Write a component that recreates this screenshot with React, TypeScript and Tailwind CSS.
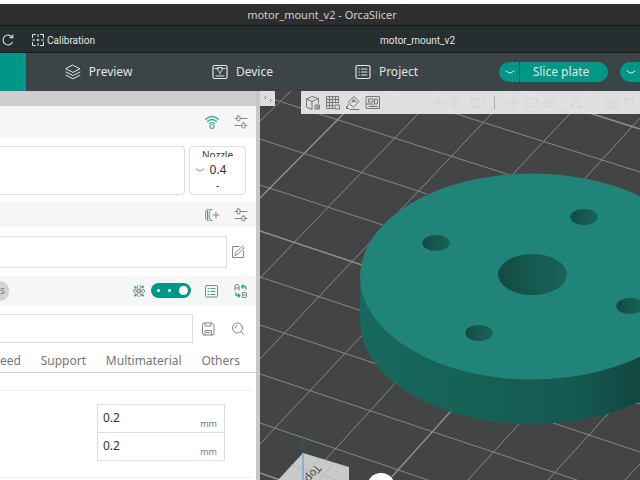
import type { ReactNode } from 'react';

interface IconProps {
  className?: string;
  viewBox?: string;
  children: ReactNode;
}

const Icon = ({ className = '', viewBox = '0 0 16 16', children }: IconProps) => (
  <svg
    className={className}
    viewBox={viewBox}
    fill="none"
    stroke="currentColor"
    strokeLinecap="round"
    strokeLinejoin="round"
    aria-hidden="true"
  >
    {children}
  </svg>
);

const RedoIcon = () => (
  <Icon className="h-3.5 w-3.5">
    <path d="M12.600 4.800A5.600 5.600 0 1 0 13 10.500M13.500 2v3.500H10" strokeWidth="1.200" />
  </Icon>
);

const CalibrationIcon = () => (
  <Icon className="h-3 w-3" viewBox="0 0 12 12">
    <path d="M.5 3.500v-3h3M8.500.5h3v3M11.500 8.500v3h-3M3.500 11.500h-3v-3" />
    <path d="M6 .5v2M6 9.500v2M.5 6h2M9.500 6h2M5 6h2M6 5v2" />
  </Icon>
);

const LayersIcon = () => (
  <Icon className="h-4 w-4">
    <path d="M8 1.200 15 4.800 8 8.400 1 4.800zM1 8l7 3.600L15 8M1 11.200l7 3.600 7-3.600" />
  </Icon>
);

const DeviceIcon = () => (
  <Icon className="h-4 w-4">
    <rect x="1" y="1.500" width="14" height="13" rx="1.500" strokeWidth="1.200" />
    <path d="M3 4.500h3M10 4.500h3M6 3.500h4v3L8 8.500 6 6.500zM8 8.500V10M4 12h8" />
  </Icon>
);

const ProjectIcon = () => (
  <Icon className="h-4 w-4">
    <rect x="1" y="1.500" width="14" height="13" rx="1.500" strokeWidth="1.200" />
    <path d="M4 5h.5M6.500 5H12M4 8h.5M6.500 8H12M4 11h.5M6.500 11H12" strokeWidth="1.200" />
  </Icon>
);

const ChevronIcon = () => (
  <Icon className="h-2 w-2.5" viewBox="0 0 10 8">
    <path d="m1 3 3 1.800q1 .5 2 0L9 3" />
  </Icon>
);

const WifiIcon = () => (
  <Icon className="h-4 w-4 text-[#3fae9f]">
    <path d="M1.500 5.500Q8-.5 14.500 5.500M3.500 7.500q4.500-4 9 0M5.500 9.500q2.500-2 5 0" strokeWidth="1.200" />
    <circle cx="8" cy="12.500" r="2" strokeWidth="1.200" />
  </Icon>
);

const SlidersIcon = () => (
  <Icon className="h-4 w-4">
    <path d="M2 4.500h2M7.500 4.500H14M2 11.500h6.500M12 11.500h2" />
    <rect x="4" y="2" width="3" height="5" rx="1" />
    <rect x="9" y="9" width="3" height="5" rx="1" />
  </Icon>
);

const FilamentIcon = () => (
  <Icon className="h-4 w-4">
    <path d="M4.500 2.500H3q-1.500 0-1.500 5.500T3 13.500h1.500M6.500 13.500H8M6.500 2.500H8M9 8h6M12 5v6" />
    <path d="M6.500 2.500Q5 3 5 8t1.500 5.500" stroke="#2fa596" />
    <path d="M3.500 4v8" stroke="#2fa596" />
  </Icon>
);

const EditIcon = () => (
  <Icon className="h-4 w-4">
    <path d="M9 2.500H2.500v11h11V7" />
    <path d="m5 11 .8-2.800L12.500 2l1.800 1.600-6.700 6.600z" />
  </Icon>
);

const AtomIcon = () => (
  <Icon className="h-4 w-4">
    <circle cx="8" cy="8" r="1.500" />
    <path d="M6.500 7.500 3 6.500 2 8l1.500 1.500 3-1M9.500 7.500l3.500-1L14 8l-1.500 1.500-3-1M7.200 6.500 6 4l1-1.500M8.800 6.500 10 4 9 2.500M7.200 9.500 6 12l1 1.500M8.800 9.500 10 12l-1 1.500" />
    <path d="m4 4 .8.8M12 3.500l-.8.8M4 12.500l.8-.8M12 12.500l-.8-.8" stroke="#2fa596" strokeWidth="1.800" />
  </Icon>
);

const ListIcon = () => (
  <Icon className="h-4 w-4">
    <rect x="2.500" y="2.500" width="12" height="11.500" rx="1" />
    <path d="M5 5.500h1M8 5.500h4M5 8.500h1M8 8.500h4M5 11.500h1M8 11.500h4" stroke="#2fa596" />
  </Icon>
);

const CompareIcon = () => (
  <Icon className="h-4 w-4">
    <path d="M2 7V3l1-1.500h2L6 3v4M2 5h4M10 9.500h3q1.500 1.500 0 2.500 1.500 1 0 2.500h-3zM10 12h3" />
    <path d="M10 2 8.500 3.500 10 5M8.500 3.500H12q1 0 1 2.500M3 10v2q0 .5.5.5h3M5.500 11 7 12.500 5.500 14" stroke="#2fa596" strokeWidth="1.300" />
  </Icon>
);

const SaveIcon = () => (
  <Icon className="h-4 w-4">
    <path d="M2.500 3q0-1 1-1h8.500l2 2v9q0 1-1 1H3.500q-1 0-1-1zM5 2v3h6V2M5 14V9.500h6.500V14M6.500 11.500h3" />
  </Icon>
);

const SearchIcon = () => (
  <Icon className="h-4 w-4">
    <circle cx="7.500" cy="7" r="5" />
    <path d="m11 10.500 2.500 3M5 7Q5 5 7 4.500" />
  </Icon>
);

const toolbarIcons = [
  {
    label: 'Add object',
    art: <path d="M1.500 4 7 1.500 13.500 3.500V8M1.500 4v8L7 14.500V6.500M1.500 4 7 6.500l6.500-3M10.500 10h4v4h-4zM12.500 11v2M11.500 12h2" />,
  },
  {
    label: 'Add plate',
    art: <path d="M9 13.500H1.500v-12h12V8M4.500 1.500v12M7.500 1.500v12M10.500 1.500V8M1.500 4.500h12M1.500 7.500h12M1.500 10.500H9M10.500 10h4v4h-4z" />,
  },
  {
    label: 'Auto orient',
    art: <path d="m3.500 7 5.500-5.500L14 6.500 8.500 12zM7 7.500l1.500-3.500 2.500 3M7.500 6.500h2.500M3.500 9.500l-2 4h2M1.500 13.500v-2M5 14.500h9" />,
  },
  {
    label: 'Arrange',
    art: <path d="M1.500 1.500h13v12h-13zM4 4h4v3H4zM10 4h2.500v5H10zM4 9h3M4 11.500h8.500M8 9v2M1.500 9H4" />,
  },
];

// Grid lines of the build plate: x1, y1, x2, y2
const gridLines = [
  [384, 91, 640, 172],
  [260, 95, 510, 175],
  [260, 139, 427, 194],
  [260, 185, 383, 225],
  [260, 277, 362, 311],
  [260, 325, 640, 452],
  [260, 374, 577, 480],
  [260, 423, 428, 480],
  [500, 358, 640, 404],
  [260, 121, 291, 91],
  [260, 278, 440, 91],
  [260, 359, 513, 91],
  [260, 444, 591, 91],
  [307, 480, 400, 378],
  [580, 184, 640, 118],
  [468, 480, 530, 412],
  [548, 480, 617, 404],
  [625, 480, 640, 464],
];

const majorLines = [
  [520, 91, 640, 129],
  [260, 231, 362, 265],
  [260, 473, 280, 480],
  [260, 198, 366, 91],
  [389, 480, 460, 401],
];

const screwHoles = [
  [436, 243],
  [584, 217],
  [479, 333],
  [630, 306],
];

const BuildPlate = () => (
  <svg
    className="absolute inset-0 h-full w-full"
    viewBox="260 91 380 389"
    preserveAspectRatio="xMinYMin slice"
    role="img"
    aria-label="Build plate with motor mount"
  >
    <defs>
      <linearGradient id="side" x1="0" x2="1">
        <stop offset="0" stopColor="#17695e" />
        <stop offset="0.3" stopColor="#166156" />
        <stop offset="0.62" stopColor="#155a52" />
        <stop offset="0.82" stopColor="#114640" />
        <stop offset="1" stopColor="#103f39" />
      </linearGradient>
      <linearGradient id="hole" x1="0" x2="1">
        <stop offset="0" stopColor="#114a43" />
        <stop offset="0.5" stopColor="#15594f" />
        <stop offset="1" stopColor="#176358" />
      </linearGradient>
    </defs>
    <rect x="260" y="91" width="380" height="389" fill="#434544" />
    <g stroke="#878988">
      {gridLines.map(([x1, y1, x2, y2]) => (
        <line key={`${x1}-${y1}`} x1={x1} y1={y1} x2={x2} y2={y2} />
      ))}
    </g>
    <g stroke="#8f9190" strokeWidth="1.400">
      {majorLines.map(([x1, y1, x2, y2]) => (
        <line key={`${x1}-${y1}`} x1={x1} y1={y1} x2={x2} y2={y2} />
      ))}
    </g>

    {/* Motor mount */}
    <path d="M360 277v44a172 103 0 0 0 344 0v-44z" fill="url(#side)" />
    <ellipse cx="532" cy="276.500" rx="172" ry="103" fill="#208578" />
    <ellipse cx="532.500" cy="274.500" rx="34.500" ry="20.500" fill="url(#hole)" />
    {screwHoles.map(([cx, cy]) => (
      <ellipse key={cx} cx={cx} cy={cy} rx="13.700" ry="8" fill="url(#hole)" />
    ))}

    {/* View cube */}
    <path d="M303 453 349 467v13h-71z" fill="#c9c9c9" />
    <path d="m291 465 46 15M320 458l-19 22M334 463l-15 17" stroke="#b8b8b8" fill="none" />
    <path d="M303 453v27" stroke="#86b0da" strokeWidth="2" />
    <path d="M300.500 440h4l-4 8h5" stroke="#2c6076" fill="none" />
    <text transform="translate(316 464) rotate(128)" fontSize="11" fill="#4a4a4a">
      Top
    </text>
    <circle cx="381" cy="487" r="14" fill="#fff" />
  </svg>
);

const SectionHeader = ({ className = '', children }: { className?: string; children: ReactNode }) => (
  <div className={`flex items-center justify-end bg-[#f6f6f6] pr-[7px] text-[#858585] ${className}`}>
    {children}
  </div>
);

const IconButton = ({ label, children }: { label: string; children: ReactNode }) => (
  <button aria-label={label} className="flex h-4 w-4 shrink-0 items-center justify-center">
    {children}
  </button>
);

const LayerInput = ({ label, className = '' }: { label: string; className?: string }) => (
  <label className={`flex h-[29px] w-[128px] items-center border border-[#dcdcdc] bg-white pr-[7px] pl-[5px] ${className}`}>
    <input
      aria-label={label}
      defaultValue="0.2"
      className="w-full min-w-0 flex-1 bg-transparent pb-0.5 text-[12px] text-[#333] outline-none"
    />
    <span className="pt-2.5 text-[9px] leading-4 text-[#777]">mm</span>
  </label>
);

const Sidebar = () => (
  <aside className="w-[256px] shrink-0 overflow-hidden bg-white">
    <div className="h-[15px] bg-[#cecece]" />

    {/* Printer */}
    <SectionHeader className="h-[31px] gap-[13px]">
      <IconButton label="Connection"><WifiIcon /></IconButton>
      <IconButton label="Printer settings"><SlidersIcon /></IconButton>
    </SectionHeader>
    <div className="flex gap-1 pt-[9px] pr-[10px] pb-[7px]">
      <button aria-label="Printer" className="h-[49px] flex-1 rounded-r-[4px] border border-l-0 border-[#dcdcdc]" />
      <div className="flex h-[49px] w-[57px] flex-col items-center rounded-[4px] border border-[#dcdcdc] text-[#333]">
        <div className="h-[10px] overflow-hidden text-[10px] leading-4">Nozzle</div>
        <button className="flex h-[26px] items-center gap-[5px] pr-[14px] text-[12px]">
          <span className="text-[#888]"><ChevronIcon /></span>
          0.4
        </button>
        <div className="text-[10px] leading-[5px]">-</div>
      </div>
    </div>

    {/* Filament */}
    <SectionHeader className="h-[25px] gap-[13px]">
      <IconButton label="Add filament"><FilamentIcon /></IconButton>
      <IconButton label="Filament settings"><SlidersIcon /></IconButton>
    </SectionHeader>
    <div className="flex items-center gap-[3px] pt-[9px] pr-[10px] pb-[8px] text-[#858585]">
      <button aria-label="Filament" className="h-[32px] flex-1 border border-l-0 border-[#dcdcdc]" />
      <IconButton label="Edit filament"><EditIcon /></IconButton>
    </div>

    {/* Process */}
    <SectionHeader className="h-[29px]">
      <div className="flex min-w-0 flex-1 justify-start">
        <button className="h-5 w-[9px] rounded-r-full bg-[#d3d3d3] text-left text-[10px] text-[#777]">s</button>
      </div>
      <AtomIcon />
      <button
        role="switch"
        aria-checked="true"
        aria-label="Advanced mode"
        className="ml-1 flex h-[15px] w-10 items-center justify-between rounded-full bg-[#009688] pr-[3px] pl-1.5"
      >
        <span className="h-[3px] w-[3px] rounded-full bg-white" />
        <span className="h-[3px] w-[3px] rounded-full bg-white" />
        <span className="h-[9px] w-[9px] rounded-full bg-white" />
      </button>
      <div className="ml-3 flex gap-[14px]">
        <IconButton label="Parameter list"><ListIcon /></IconButton>
        <IconButton label="Compare presets"><CompareIcon /></IconButton>
      </div>
    </SectionHeader>
    <div className="flex items-center justify-end pt-[9px] pr-[10px] text-[#858585]">
      <button aria-label="Process preset" className="mr-[7px] h-[29px] flex-1 border border-l-0 border-[#dcdcdc]" />
      <div className="flex gap-[14px]">
        <IconButton label="Save preset"><SaveIcon /></IconButton>
        <IconButton label="Search"><SearchIcon /></IconButton>
      </div>
    </div>

    <nav className="flex h-[30px] items-center justify-between border-b border-[#cfcfcf] pt-1.5 pr-4 text-[12px] text-[#757575]">
      <button>eed</button>
      <button>Support</button>
      <button>Multimaterial</button>
      <button>Others</button>
    </nav>

    <div className="mr-1 border-b border-[#efefef] pt-[17px]" />
    <div className="mr-1 flex flex-col items-end border-b border-[#efefef] pt-[13px] pr-[27px] pb-4">
      <LayerInput label="Layer height" />
      <LayerInput label="Initial layer height" className="-mt-px" />
    </div>
  </aside>
);

const Viewport = () => (
  <main className="relative min-w-0 flex-1 overflow-hidden bg-[#434544]">
    <BuildPlate />
    <button
      aria-label="Collapse sidebar"
      className="absolute top-0 left-0 flex h-[15px] w-[15px] items-center justify-center bg-[#dfdfdf] text-[#858585]"
    >
      <Icon className="h-3 w-3" viewBox="0 0 12 12">
        <path d="M4 3 2.500 4.500 4 6M8 6l1.500 1.500L8 9" />
      </Icon>
    </button>
    <div className="absolute top-0 right-0 left-[41px] flex h-[23px] items-center gap-1 overflow-hidden bg-[#eff0f0]/90 pl-1 text-[#777]">
      {toolbarIcons.map(({ label, art }) => (
        <button key={label} aria-label={label} className="h-4 w-4 shrink-0">
          <Icon className="h-4 w-4">{art}</Icon>
        </button>
      ))}
      {/* Disabled tools */}
      <Icon className="h-4 w-[250px] shrink-0 text-[#d2d3d3]" viewBox="0 0 250 16">
        <path d="M48 8h12M54 4v8M67 4h4v8h-4zM74 4v8M87 4h12v8H87zM93 4v8" />
        <path d="M109.500 2v12" stroke="#b0b1b1" />
        <path d="M122 8h12M128 3v10M142 4h10v8h-10zM160 5h12M160 8h12M160 11h12M186 12l5-8 5 8zM222 4h4v9h-4zM229 6h4v7h-4zM240 4v8M240 4h8v8" />
      </Icon>
    </div>
  </main>
);

export default function App() {
  return (
    <div className="flex min-h-screen flex-col overflow-hidden bg-white pt-1 font-['Noto_Sans','Open_Sans',sans-serif]">
      <header className="text-[#e3e5e5]">
        <div className="flex h-[21px] items-center justify-center bg-[#2e2e2e] pt-0.5 pl-1 text-[11px] text-[#cfcfcf]">
          motor_mount_v2 - OrcaSlicer
        </div>
        <div className="grid h-7 grid-cols-[380px_1fr] items-center border-y border-[#13191a] bg-[#262e30] pt-0.5 font-['Roboto','Noto_Sans',sans-serif] text-[10px]">
          <div className="flex items-center gap-[17px] pl-px">
            <button aria-label="Redo"><RedoIcon /></button>
            <button className="flex items-center gap-[3px]">
              <CalibrationIcon />
              Calibration
            </button>
          </div>
          <span>motor_mount_v2</span>
        </div>
        <div className="flex h-[38px] items-center bg-[#3b4446] text-[12px]">
          <button aria-label="Prepare" className="h-full w-[26px] bg-[#009688]" />
          <nav className="flex">
            <button className="flex w-[145px] items-center justify-center gap-2"><LayersIcon />Preview</button>
            <button className="flex w-[143px] items-center justify-center gap-2"><DeviceIcon />Device</button>
            <button className="flex w-[145px] items-center justify-center gap-2"><ProjectIcon />Project</button>
          </nav>
          <div className="ml-auto flex h-5 gap-3">
            <div className="flex gap-px">
              <button aria-label="Slice options" className="flex w-5 items-center justify-center rounded-l-full bg-[#009688] pl-0.5">
                <ChevronIcon />
              </button>
              <button className="w-[88px] rounded-r-full bg-[#009688] pr-1.5">Slice plate</button>
            </div>
            <button aria-label="Print options" className="flex w-5 items-center justify-center rounded-l-full bg-[#009688] pl-0.5">
              <ChevronIcon />
            </button>
          </div>
        </div>
      </header>
      <div className="flex flex-1">
        <Sidebar />
        <div className="w-1 shrink-0 bg-[#c5c9c8]" />
        <Viewport />
      </div>
    </div>
  );
}
